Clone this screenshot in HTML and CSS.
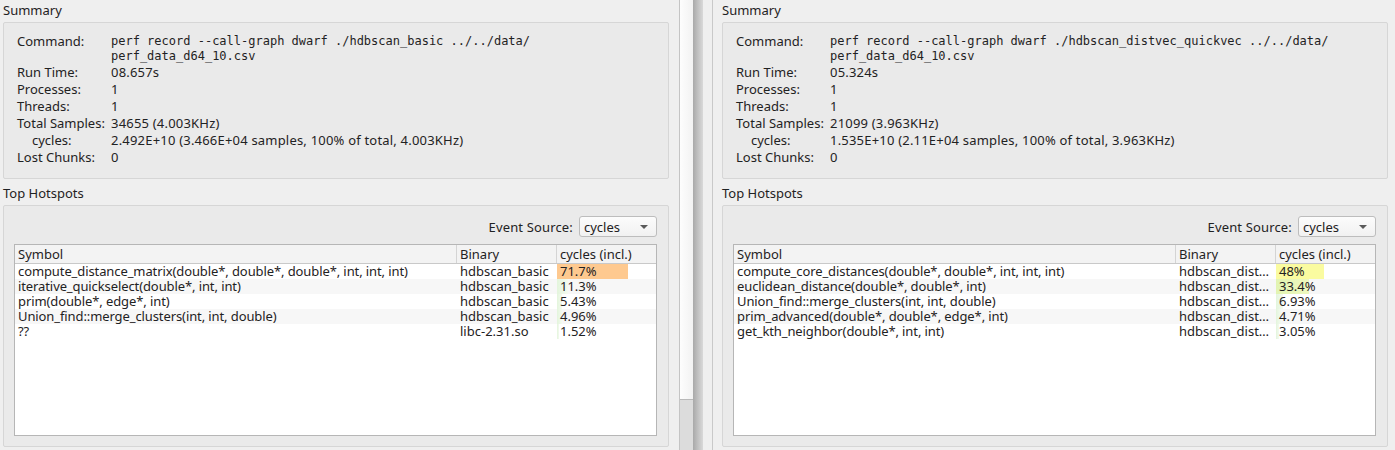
FILE: index.html
```html
<!DOCTYPE html>
<html>
<head>
<meta charset="utf-8">
<link rel="stylesheet" href="styles.css">
</head>
<body>
<div class="app">
  <div class="pane-left">
    <div class="content">
      <div class="group-title">Summary</div>
      <div class="groupbox summary">
        <div class="kv">
          <div class="k cmd">Command:</div>
          <div class="v mono">perf record --call-graph dwarf ./hdbscan_basic ../../data/<br>perf_data_d64_10.csv</div>
          <div class="k">Run Time:</div><div class="v">08.657s</div>
          <div class="k">Processes:</div><div class="v">1</div>
          <div class="k">Threads:</div><div class="v">1</div>
          <div class="k">Total Samples:</div><div class="v">34655 (4.003KHz)</div>
          <div class="k indent">cycles:</div><div class="v">2.492E+10 (3.466E+04 samples, 100% of total, 4.003KHz)</div>
          <div class="k">Lost Chunks:</div><div class="v">0</div>
        </div>
      </div>
      <div class="group-title second">Top Hotspots</div>
      <div class="groupbox hotspots">
        <div class="event-row">
          <span class="event-label">Event Source:</span>
          <div class="combo"><span>cycles</span><span class="arrow"></span></div>
        </div>
        <div class="table">
          <div class="thead">
            <div class="th">Symbol</div><div class="th">Binary</div><div class="th">cycles (incl.)</div>
          </div>
          <div class="tr"><div class="td sym">compute_distance_matrix(double*, double*, double*, int, int, int)</div><div class="td">hdbscan_basic</div><div class="td cost"><span class="bar b-orange" style="width:71.7%"></span><span class="val">71.7%</span></div></div>
          <div class="tr alt"><div class="td sym">iterative_quickselect(double*, int, int)</div><div class="td">hdbscan_basic</div><div class="td cost"><span class="bar b-faint" style="width:11.3%"></span><span class="val">11.3%</span></div></div>
          <div class="tr"><div class="td sym">prim(double*, edge*, int)</div><div class="td">hdbscan_basic</div><div class="td cost"><span class="bar b-faint" style="width:5.43%"></span><span class="val">5.43%</span></div></div>
          <div class="tr alt"><div class="td sym">Union_find::merge_clusters(int, int, double)</div><div class="td">hdbscan_basic</div><div class="td cost"><span class="bar b-faint" style="width:4.96%"></span><span class="val">4.96%</span></div></div>
          <div class="tr"><div class="td sym">??</div><div class="td">libc-2.31.so</div><div class="td cost"><span class="bar b-faint" style="width:1.52%"></span><span class="val">1.52%</span></div></div>
        </div>
      </div>
    </div>
  </div>
  <div class="scrollbar"><div class="handle"></div><div class="track"></div></div>
  <div class="splitter"></div>
  <div class="pane-right">
    <div class="inner">
      <div class="content">
        <div class="group-title">Summary</div>
        <div class="groupbox summary">
          <div class="kv">
            <div class="k cmd">Command:</div>
            <div class="v mono">perf record --call-graph dwarf ./hdbscan_distvec_quickvec ../../data/<br>perf_data_d64_10.csv</div>
            <div class="k">Run Time:</div><div class="v">05.324s</div>
            <div class="k">Processes:</div><div class="v">1</div>
            <div class="k">Threads:</div><div class="v">1</div>
            <div class="k">Total Samples:</div><div class="v">21099 (3.963KHz)</div>
            <div class="k indent">cycles:</div><div class="v">1.535E+10 (2.11E+04 samples, 100% of total, 3.963KHz)</div>
            <div class="k">Lost Chunks:</div><div class="v">0</div>
          </div>
        </div>
        <div class="group-title second">Top Hotspots</div>
        <div class="groupbox hotspots">
          <div class="event-row">
            <span class="event-label">Event Source:</span>
            <div class="combo"><span>cycles</span><span class="arrow"></span></div>
          </div>
          <div class="table">
            <div class="thead">
              <div class="th">Symbol</div><div class="th">Binary</div><div class="th">cycles (incl.)</div>
            </div>
            <div class="tr"><div class="td sym">compute_core_distances(double*, double*, int, int, int)</div><div class="td">hdbscan_dist…</div><div class="td cost"><span class="bar b-yellow" style="width:48%"></span><span class="val">48%</span></div></div>
            <div class="tr alt"><div class="td sym">euclidean_distance(double*, double*, int)</div><div class="td">hdbscan_dist…</div><div class="td cost"><span class="bar b-lime" style="width:33.4%"></span><span class="val">33.4%</span></div></div>
            <div class="tr"><div class="td sym">Union_find::merge_clusters(int, int, double)</div><div class="td">hdbscan_dist…</div><div class="td cost"><span class="bar b-faint" style="width:6.93%"></span><span class="val">6.93%</span></div></div>
            <div class="tr alt"><div class="td sym">prim_advanced(double*, double*, edge*, int)</div><div class="td">hdbscan_dist…</div><div class="td cost"><span class="bar b-faint" style="width:4.71%"></span><span class="val">4.71%</span></div></div>
            <div class="tr"><div class="td sym">get_kth_neighbor(double*, int, int)</div><div class="td">hdbscan_dist…</div><div class="td cost"><span class="bar b-faint" style="width:3.05%"></span><span class="val">3.05%</span></div></div>
          </div>
        </div>
      </div>
    </div>
  </div>
</div>
</body>
</html>
```
FILE: styles.css
```css
* { box-sizing: border-box; }
html, body { margin: 0; padding: 0; }
body {
  background: #efefef;
  font-family: "Noto Sans", "Open Sans", sans-serif;
  font-size: 13px;
  color: #1f2223;
  width: 1395px;
  height: 450px;
  overflow: hidden;
}
.app { display: flex; height: 450px; }
.pane-left { width: 679px; flex: none; }
.scrollbar {
  width: 14px; flex: none;
  border-left: 1px solid #c4c4c4;
  display: flex; flex-direction: column;
}
.scrollbar .handle {
  height: 400px;
  background: linear-gradient(to right, #fdfdfd, #f2f2f2);
  border-bottom: 1px solid #b9b9b9;
}
.scrollbar .track { flex: 1; background: #dcdcdc; }
.splitter {
  width: 10px; flex: none;
  background: linear-gradient(to right, #a9a9a9, #c6c6c6 60%, #d9d9d9);
}
.pane-right { flex: 1; padding-left: 9px; }
.pane-right .inner { border-left: 1px solid #c9c9c9; padding-left: 6px; height: 100%; }
.content { width: 672px; padding: 0 3px; }
.group-title { height: 22px; line-height: 21px; }
.group-title.second { height: 26px; line-height: 28px; }
.groupbox {
  border: 1px solid #d6d6d6;
  border-radius: 2px;
  background: #eaeaea;
}
.summary { height: 157px; padding: 11px 10px 0 13px; }
.kv {
  display: grid;
  grid-template-columns: 94px 1fr;
  line-height: 17px;
}
.v { letter-spacing: 0.2px; }
.k.cmd, .v.mono { line-height: 15px; }
.v.mono { letter-spacing: 0; }
.k.indent { padding-left: 15px; }
.mono { font-family: "DejaVu Sans Mono", monospace; font-size: 12px; }
.hotspots { height: 242px; padding: 10px 11px 0 10px; }
.event-row { display: flex; justify-content: flex-end; align-items: center; gap: 6px; height: 21px; }
.event-label { letter-spacing: 0.15px; }
.combo {
  width: 78px; height: 21px;
  border: 1px solid #bdbdbd; border-radius: 3px;
  background: linear-gradient(#fcfcfc, #f1f1f1);
  display: flex; align-items: center; justify-content: space-between;
  padding: 0 8px 0 4px;
}
.arrow {
  width: 0; height: 0;
  border-left: 4px solid transparent; border-right: 4px solid transparent;
  border-top: 4px solid #5a5a5a;
}
.table {
  margin-top: 7px;
  height: 192px;
  border: 1px solid #b6b6b6;
  background: #fff;
}
.thead, .tr {
  display: grid;
  grid-template-columns: 442px 100px 1fr;
}
.thead { height: 19px; background: #f3f3f3; border-bottom: 1px solid #c9c9c9; line-height: 18px; }
.th { padding-left: 3px; border-right: 1px solid #d4d4d4; }
.th:last-child { border-right: none; }
.tr { height: 15px; line-height: 15px; }
.tr.alt { background: #f7f7f7; }
.td { padding-left: 3px; white-space: nowrap; }
.td.sym { letter-spacing: -0.1px; }
.td.cost { position: relative; padding-left: 0; }
.bar { position: absolute; left: 0; top: 0; bottom: 0; }
.val { position: relative; padding-left: 3px; }
.b-orange { background: #fec98f; }
.b-yellow { background: #fafba0; }
.b-lime { background: linear-gradient(to right, #e2f4b2, #eef8bf); }
.b-faint { background: linear-gradient(to right, #e3f5dc, #f4faf0); }
```
